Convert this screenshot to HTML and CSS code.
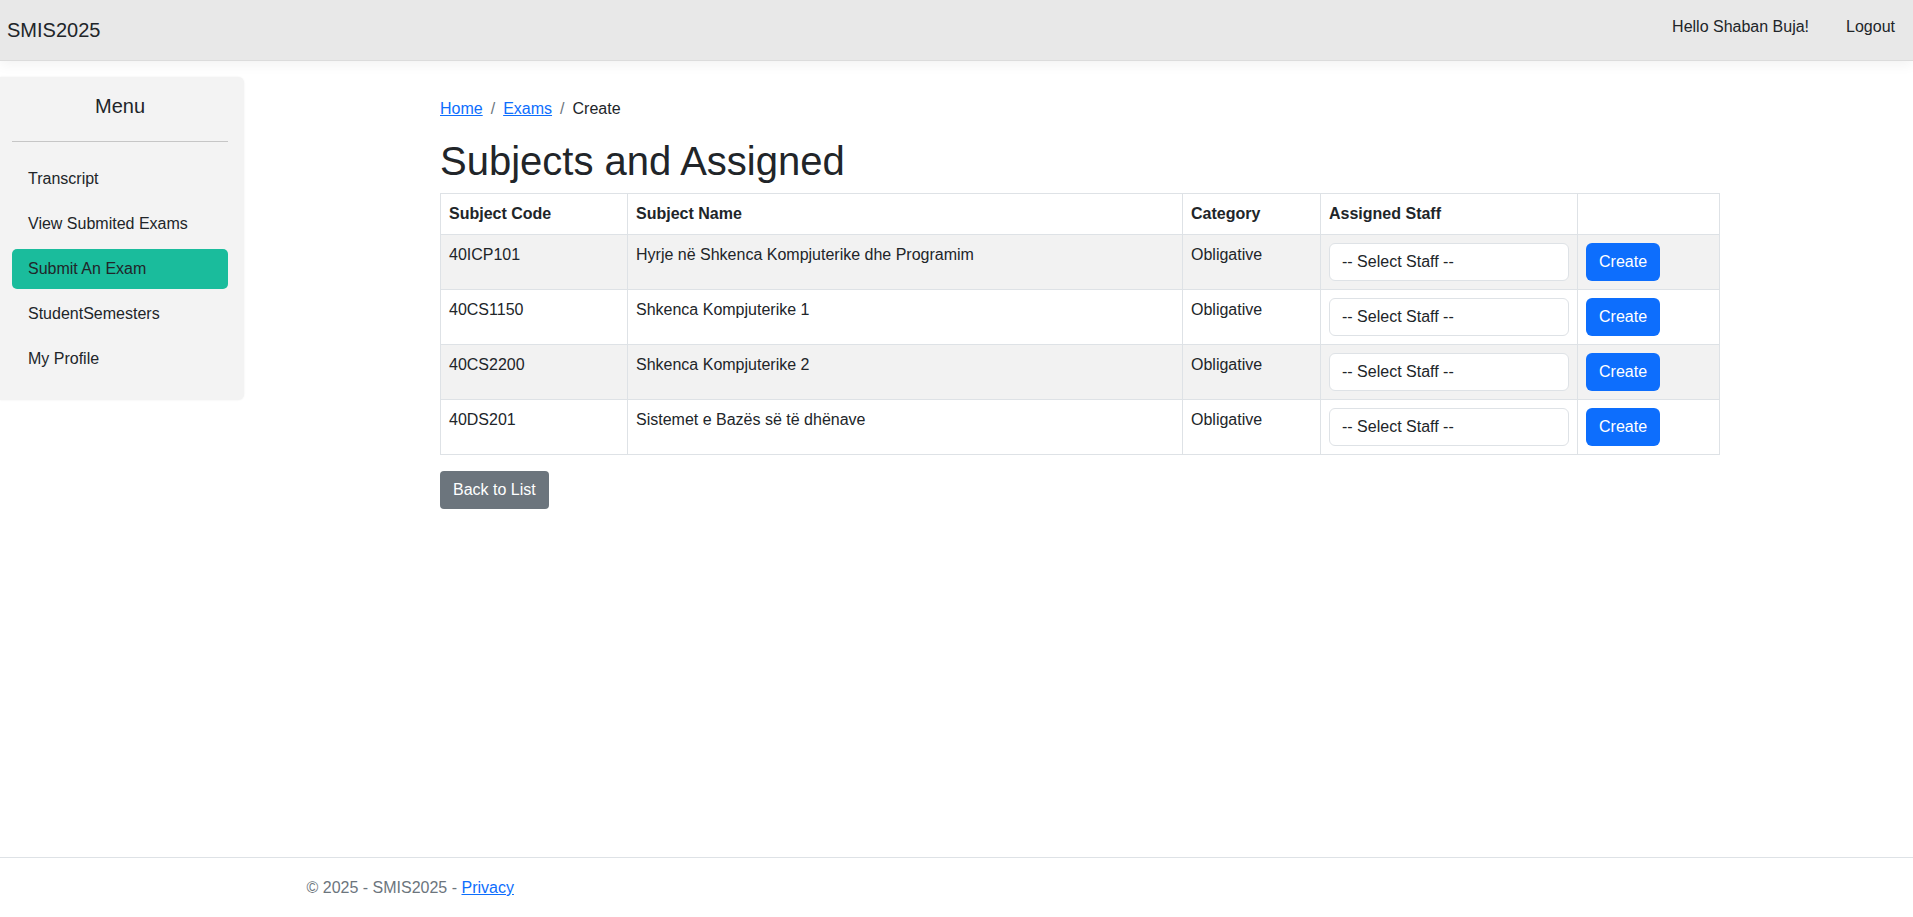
FILE: index.html
```html
<!DOCTYPE html>
<html lang="en">
<head>
<meta charset="utf-8">
<title>Create - SMIS2025</title>
<link rel="stylesheet" href="styles.css">
</head>
<body>
<header class="navbar">
  <a class="brand" href="#">SMIS2025</a>
  <nav class="nav-right">
    <a class="nav-link" href="#">Hello Shaban Buja!</a>
    <a class="nav-link" href="#">Logout</a>
  </nav>
</header>

<div class="layout">
  <aside class="sidebar">
    <h5 class="sidebar-title">Menu</h5>
    <hr class="sidebar-hr">
    <ul class="menu">
      <li><a class="menu-item" href="#">Transcript</a></li>
      <li><a class="menu-item" href="#">View Submited Exams</a></li>
      <li><a class="menu-item active" href="#">Submit An Exam</a></li>
      <li><a class="menu-item" href="#">StudentSemesters</a></li>
      <li><a class="menu-item" href="#">My Profile</a></li>
    </ul>
  </aside>

  <main class="main">
    <div class="main-inner">
      <ol class="breadcrumb">
        <li class="crumb"><a href="#">Home</a></li>
        <li class="crumb"><a href="#">Exams</a></li>
        <li class="crumb current">Create</li>
      </ol>
      <h1 class="title">Subjects and Assigned</h1>
      <table class="table">
        <colgroup>
          <col class="c1"><col class="c2"><col class="c3"><col class="c4"><col class="c5">
        </colgroup>
        <thead>
          <tr>
            <th>Subject Code</th>
            <th>Subject Name</th>
            <th>Category</th>
            <th>Assigned Staff</th>
            <th></th>
          </tr>
        </thead>
        <tbody>
          <tr>
            <td>40ICP101</td>
            <td>Hyrje në Shkenca Kompjuterike dhe Programim</td>
            <td>Obligative</td>
            <td><select class="select"><option>-- Select Staff --</option></select></td>
            <td><button class="btn btn-primary" type="button">Create</button></td>
          </tr>
          <tr>
            <td>40CS1150</td>
            <td>Shkenca Kompjuterike 1</td>
            <td>Obligative</td>
            <td><select class="select"><option>-- Select Staff --</option></select></td>
            <td><button class="btn btn-primary" type="button">Create</button></td>
          </tr>
          <tr>
            <td>40CS2200</td>
            <td>Shkenca Kompjuterike 2</td>
            <td>Obligative</td>
            <td><select class="select"><option>-- Select Staff --</option></select></td>
            <td><button class="btn btn-primary" type="button">Create</button></td>
          </tr>
          <tr>
            <td>40DS201</td>
            <td>Sistemet e Bazës së të dhënave</td>
            <td>Obligative</td>
            <td><select class="select"><option>-- Select Staff --</option></select></td>
            <td><button class="btn btn-primary" type="button">Create</button></td>
          </tr>
        </tbody>
      </table>
      <a class="btn btn-secondary" href="#">Back to List</a>
    </div>
  </main>
</div>

<footer class="footer">
  <div class="footer-inner">
    © 2025 - SMIS2025 - <a href="#">Privacy</a>
  </div>
</footer>
</body>
</html>
```

FILE: styles.css
```css
* { box-sizing: border-box; }

html, body { height: 100%; }

body {
  margin: 0;
  font-family: "Liberation Sans", Arial, sans-serif;
  font-size: 16px;
  line-height: 1.5;
  color: #212529;
  background: #fff;
  display: flex;
  flex-direction: column;
  min-height: 100vh;
}

a { color: #0d6efd; }

/* Navbar */
.navbar {
  height: 61px;
  background: #e8e8e8;
  border-bottom: 1px solid #dcdcdc;
  box-shadow: 0 4px 12px rgba(0, 0, 0, 0.05);
  display: flex;
  align-items: center;
  justify-content: space-between;
  padding: 0 10px 0 7px;
  position: relative;
  z-index: 1;
}

.brand {
  font-size: 20px;
  line-height: 30px;
  color: #212529;
  text-decoration: none;
}

.nav-right {
  display: flex;
  gap: 21px;
  padding-bottom: 7px;
}

.nav-link {
  color: #212529;
  text-decoration: none;
  padding: 0 8px;
  line-height: 24px;
}

/* Layout */
.layout {
  display: flex;
  align-items: flex-start;
}

/* Sidebar */
.sidebar {
  width: 244px;
  flex: none;
  margin-top: 16px;
  background: #f3f3f3;
  border-radius: 0 6px 6px 0;
  box-shadow: 0 0 2px rgba(0, 0, 0, 0.08);
  padding: 14px 16px 21px 12px;
}

.sidebar-title {
  margin: 0;
  text-align: center;
  font-size: 20px;
  font-weight: 400;
  line-height: 30px;
}

.sidebar-hr {
  margin: 20px 0 17px;
  border: 0;
  border-top: 1px solid #c6c6c6;
}

.menu {
  list-style: none;
  margin: 0;
  padding: 0;
  display: flex;
  flex-direction: column;
  gap: 5px;
}

.menu-item {
  display: block;
  padding: 8px 16px;
  line-height: 24px;
  color: #212529;
  text-decoration: none;
  border-radius: 5px;
}

.menu-item.active {
  background: #1abc9c;
}

/* Main */
.main {
  flex: 1;
  padding: 36px 0 16px 196px;
}

.main-inner {
  width: 1279px;
}

.breadcrumb {
  list-style: none;
  margin: 0 0 16px;
  padding: 0;
  display: flex;
  line-height: 24px;
}

.crumb + .crumb {
  padding-left: 8px;
}

.crumb + .crumb::before {
  content: "/";
  color: #6c757d;
  padding-right: 8px;
}

.crumb.current { color: #212529; }

.title {
  margin: 0 0 8px;
  font-size: 40px;
  font-weight: 500;
  line-height: 48px;
}

/* Table */
.table {
  width: 1279px;
  table-layout: fixed;
  border-collapse: collapse;
  margin-bottom: 16px;
  border: 1px solid #dee2e6;
}

.c1 { width: 187px; }
.c2 { width: 555px; }
.c3 { width: 138px; }
.c4 { width: 257px; }
.c5 { width: 142px; }

.table th,
.table td {
  border: 1px solid #dee2e6;
  padding: 8px;
  text-align: left;
  vertical-align: top;
  line-height: 24px;
}

.table th { font-weight: 700; }

.table tbody tr:nth-child(odd) td {
  background: #f2f2f2;
}

.select {
  display: block;
  width: 100%;
  height: 38px;
  padding: 6px 12px;
  font-family: inherit;
  font-size: 16px;
  line-height: 24px;
  color: #212529;
  background: #fff;
  border: 1px solid #dee2e6;
  border-radius: 6px;
  -webkit-appearance: none;
  appearance: none;
  margin: 0;
}

.btn {
  display: inline-block;
  vertical-align: top;
  padding: 6px 12px;
  font-family: inherit;
  font-size: 16px;
  line-height: 24px;
  border: 1px solid transparent;
  border-radius: 6px;
  text-decoration: none;
  cursor: pointer;
  margin: 0;
}

.btn-primary {
  background: #0d6efd;
  color: #fff;
}

.btn-secondary {
  background: #6c757d;
  color: #fff;
  border-radius: 4px;
}

/* Footer */
.footer {
  margin-top: auto;
  border-top: 1px solid #dee2e6;
  line-height: 59px;
  color: #6c757d;
  white-space: nowrap;
}

.footer-inner {
  width: 1320px;
  margin: 0 auto;
  padding: 0 10px;
}
```
